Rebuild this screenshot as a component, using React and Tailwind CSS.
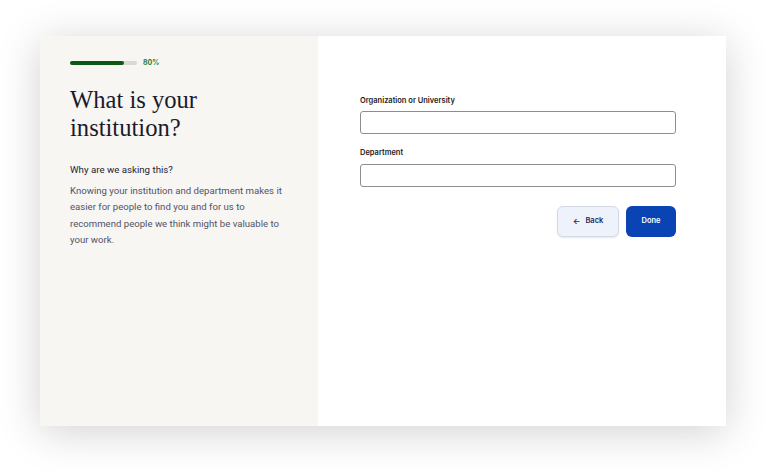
import React from 'react';

const App = () => {
  return (
    <div className="w-[766px] h-[470px] bg-white pt-[36px] pl-[40px]">
      {/* Card */}
      <div className="w-[686px] h-[390px] flex bg-white shadow-[0_6px_40px_rgba(0,0,0,0.18)]">

        {/* Left panel */}
        <div className="w-[278px] bg-[#f7f6f3] pl-[30px] pr-[28px] pt-[22px]">
          <div className="flex items-center gap-[6px]">
            <div className="w-[67px] h-[4px] rounded-full bg-[#dcd8d2]">
              <div className="w-[54px] h-[4px] rounded-full bg-[#0b5a14]" />
            </div>
            <span className="text-[7px] font-bold text-[#2e7d32] font-['Inter',sans-serif]">80%</span>
          </div>

          <h1 className="mt-[17px] text-[24.6px] leading-[28px] text-[#1a1a2a] font-['Liberation_Serif',serif]">
            What is your<br />institution?
          </h1>

          <p className="mt-[21px] text-[9.7px] text-[#222230] font-['Roboto',sans-serif]">
            Why are we asking this?
          </p>
          <p className="mt-[6px] text-[9.6px] leading-[16.3px] text-[#545366] font-['Roboto',sans-serif]">
            Knowing your institution and department makes it easier for people to find you and for us to recommend people we think might be valuable to your work.
          </p>
        </div>

        {/* Right panel */}
        <div className="flex-1 pl-[42px] pr-[50px] pt-[59px] font-['Inter',sans-serif]">
          <label className="block text-[7.5px] font-semibold text-[#1b1b1b]">Organization or University</label>
          <div className="mt-[5px] h-[23px] rounded-[3px] border border-[#8e8e8e] bg-white" />

          <label className="block mt-[13px] text-[7.5px] font-semibold text-[#1b1b1b]">Department</label>
          <div className="mt-[5px] h-[23px] rounded-[3px] border border-[#8e8e8e] bg-white" />

          <div className="mt-[19px] flex justify-end gap-[7px]">
            <button className="w-[62px] h-[31px] rounded-[6px] bg-[#eef2fa] border border-[#d3d9e6] shadow-[0_1px_2px_rgba(0,0,0,0.1)] flex items-center justify-center gap-[5px] text-[7.5px] font-semibold text-[#1c2c64]">
              <span className="text-[8px]">←</span> Back
            </button>
            <button className="w-[50px] h-[31px] rounded-[6px] bg-[#0a43b3] flex items-center justify-center text-[7.5px] font-semibold text-white">
              Done
            </button>
          </div>
        </div>
      </div>
    </div>
  );
};

export default App;
